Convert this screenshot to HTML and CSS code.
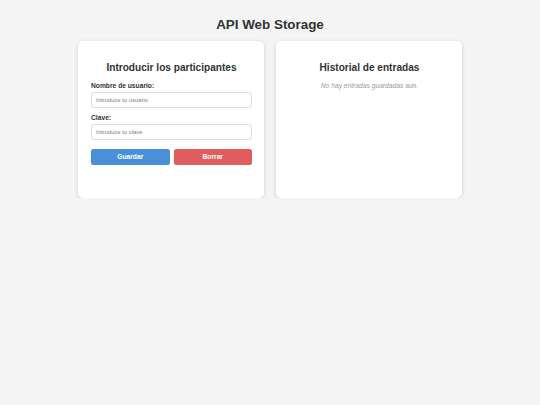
FILE: index.html
```html
<!DOCTYPE html>
<html lang="es">
<head>
<meta charset="utf-8">
<title>API Web Storage</title>
<link rel="stylesheet" href="styles.css">
</head>
<body>
<h1 class="title">API Web Storage</h1>
<div class="wrap">
  <section class="card">
    <h2 class="card-title">Introducir los participantes</h2>
    <label class="label" for="u">Nombre de usuario:</label>
    <input class="input" id="u" type="text" placeholder="Introduce tu usuario">
    <label class="label" for="c">Clave:</label>
    <input class="input" id="c" type="password" placeholder="Introduce tu clave">
    <div class="actions">
      <button class="btn btn-save" type="button">Guardar</button>
      <button class="btn btn-del" type="button">Borrar</button>
    </div>
  </section>
  <section class="card">
    <h2 class="card-title">Historial de entradas</h2>
    <p class="empty">No hay entradas guardadas aún.</p>
  </section>
</div>
</body>
</html>
```
FILE: styles.css
```css
* { box-sizing: border-box; }
html, body { margin: 0; padding: 0; }
body {
  background: #f4f4f4;
  font-family: "Liberation Sans", Arial, sans-serif;
  color: #333;
  padding-top: 17px;
}
.title {
  margin: 0 0 8px;
  text-align: center;
  font-size: 13.4px;
  line-height: 16px;
  font-weight: bold;
  color: #333;
}
.wrap {
  display: flex;
  justify-content: center;
  gap: 12px;
}
.card {
  width: 186px;
  height: 157px;
  background: #fff;
  border-radius: 5px;
  box-shadow: 0 1px 4px rgba(0,0,0,0.16);
  padding: 21px 12px 0 13px;
  display: flex;
  flex-direction: column;
}
.card-title {
  margin: 0 0 8px;
  text-align: center;
  font-size: 10.1px;
  line-height: 12px;
  font-weight: bold;
  color: #333;
}
.label {
  display: block;
  font-size: 6.7px;
  line-height: 8px;
  font-weight: bold;
  color: #333;
  margin-bottom: 2px;
}
.input {
  display: block;
  width: 100%;
  height: 16px;
  margin: 0 0 6px;
  padding: 0 4px;
  border: 1px solid #ddd;
  border-radius: 3px;
  font-family: "Liberation Sans", Arial, sans-serif;
  font-size: 5.9px;
  color: #333;
  background: #fff;
  outline: none;
}
.input::placeholder { color: #808080; }
.actions {
  display: flex;
  gap: 4px;
  margin-top: 3px;
}
.btn {
  flex: 1;
  height: 15.5px;
  border: none;
  border-radius: 2.5px;
  color: #fff;
  font-family: "Liberation Sans", Arial, sans-serif;
  font-size: 6.7px;
  font-weight: bold;
  padding: 0;
  cursor: pointer;
}
.btn-save { background: #4a90d9; }
.btn-del { background: #e05d5d; }
.empty {
  margin: 0;
  text-align: center;
  font-size: 6.7px;
  line-height: 8px;
  font-style: italic;
  color: #999;
}
```
